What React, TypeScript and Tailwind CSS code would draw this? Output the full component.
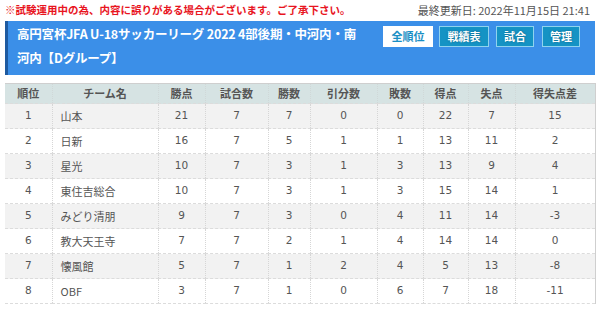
import React from "react";

const rows = [
  ["1", "山本", "21", "7", "7", "0", "0", "22", "7", "15"],
  ["2", "日新", "16", "7", "5", "1", "1", "13", "11", "2"],
  ["3", "星光", "10", "7", "3", "1", "3", "13", "9", "4"],
  ["4", "東住吉総合", "10", "7", "3", "1", "3", "15", "14", "1"],
  ["5", "みどり清朋", "9", "7", "3", "0", "4", "11", "14", "-3"],
  ["6", "教大天王寺", "7", "7", "2", "1", "4", "14", "14", "0"],
  ["7", "懐風館", "5", "7", "1", "2", "4", "5", "13", "-8"],
  ["8", "OBF", "3", "7", "1", "0", "6", "7", "18", "-11"],
];

const heads = ["順位", "チーム名", "勝点", "試合数", "勝数", "引分数", "敗数", "得点", "失点", "得失点差"];
const widths = ["w-[47px]", "w-[106px]", "w-[47px]", "w-[63px]", "w-[42px]", "w-[67px]", "w-[46px]", "w-[45px]", "w-[47px]", "w-[80px]"];

const jp = '"Noto Sans CJK JP", sans-serif';

export default function App() {
  return (
    <div
      className="w-[600px] h-[309px] bg-white overflow-hidden"
      style={{ fontFamily: '"DejaVu Sans", "Noto Sans CJK JP", sans-serif' }}
    >
      <div className="flex justify-between items-center px-[5px] pt-[2px] h-[19px]">
        <div className="text-[10.5px] font-bold text-[#e8141e] leading-none" style={{ fontFamily: jp }}>
          ※試験運用中の為、内容に誤りがある場合がございます。ご了承下さい。
        </div>
        <div className="text-[11px] text-[#555] leading-none pr-[5px]" style={{ fontFamily: jp }}>
          最終更新日: 2022年11月15日 21:41
        </div>
      </div>
      <div className="mx-[5px] mt-[2px] h-[54px] bg-[#3b8fe8] border-l-[3px] border-[#1e5aa0] flex justify-between pl-[9px] pr-[15px]">
        <div
          className="text-white font-bold text-[12.5px] leading-[24px] pt-[1px] tracking-[-0.2px]"
          style={{ fontFamily: jp }}
        >
          <div className="whitespace-nowrap">高円宮杯JFA U-18サッカーリーグ 2022 4部後期・中河内・南</div>
          <div className="whitespace-nowrap">河内【Dグループ】</div>
        </div>
        <div className="flex gap-[6px] pt-[5px] h-fit" style={{ fontFamily: jp }}>
          <div className="w-[50px] h-[21px] bg-white text-[#1a8fc4] text-[11px] font-bold flex items-center justify-center">全順位</div>
          <div className="w-[50px] h-[21px] bg-[#1593c4] border border-[#8fd3ee] text-white text-[11px] font-bold flex items-center justify-center [text-shadow:0_0_2px_#0b5f80]">戦績表</div>
          <div className="w-[38px] h-[21px] bg-[#1593c4] border border-[#8fd3ee] text-white text-[11px] font-bold flex items-center justify-center ml-[1px] [text-shadow:0_0_2px_#0b5f80]">試合</div>
          <div className="w-[38px] h-[21px] bg-[#1593c4] border border-[#8fd3ee] text-white text-[11px] font-bold flex items-center justify-center ml-[2px] [text-shadow:0_0_2px_#0b5f80]">管理</div>
        </div>
      </div>
      <table className="ml-[5px] mt-[8px] w-[590px] border-collapse table-fixed border-t border-r border-[#cfcfcf]">
        <thead>
          <tr className="h-[20px] bg-[#d6e3e3]">
            {heads.map((h, i) => (
              <th
                key={h}
                className={`${widths[i]} p-0 text-[11px] font-bold text-[#555] text-center border-l border-dotted border-[#d0d8d8] ${i === 0 ? "border-l-0" : ""}`}
                style={{ fontFamily: jp }}
              >
                {h}
              </th>
            ))}
          </tr>
        </thead>
        <tbody>
          {rows.map((r, ri) => (
            <tr key={ri} className={`h-[25px] ${ri % 2 === 0 ? "bg-[#f2f2f2]" : "bg-white"} border-t border-dashed border-[#dcdcdc]`}>
              {r.map((c, ci) => (
                <td
                  key={ci}
                  className={`p-0 text-[10.5px] text-[#555] ${ci === 1 ? "text-left pl-[8px]" : "text-center"} ${ci === 0 ? "" : "border-l border-dotted border-[#d6d6d6]"}`}
                  style={ci === 1 ? { fontFamily: jp, fontSize: "11px" } : undefined}
                >
                  {c}
                </td>
              ))}
            </tr>
          ))}
          <tr className="h-0 border-t border-dashed border-[#dcdcdc]"><td colSpan={10} className="p-0"></td></tr>
        </tbody>
      </table>
    </div>
  );
}
